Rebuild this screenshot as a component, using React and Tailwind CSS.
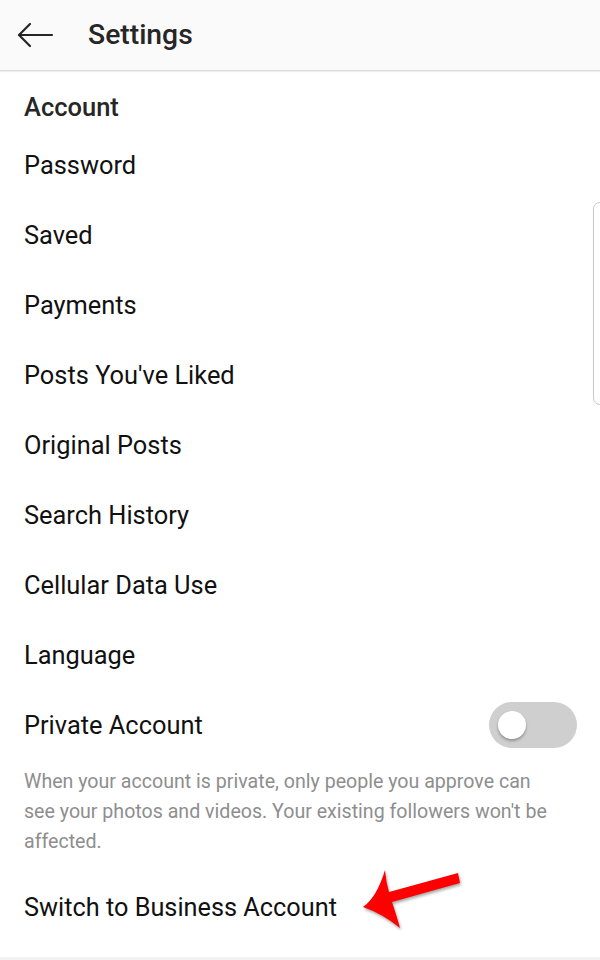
export default function App() {
  const items = [
    "Password",
    "Saved",
    "Payments",
    "Posts You've Liked",
    "Original Posts",
    "Search History",
    "Cellular Data Use",
    "Language",
  ];
  return (
    <div className="relative w-[600px] h-[960px] overflow-hidden bg-white text-[#111] font-['Roboto',sans-serif]">
      <div className="h-[71px] bg-[#fafafa] border-b border-[#dbdbdb] shadow-[0_1px_1px_rgba(0,0,0,0.06)] flex items-center">
        <svg width="38" height="26" viewBox="0 0 38 26" className="ml-[16px]" fill="none" stroke="#262626" strokeWidth="2.2" strokeLinecap="round" strokeLinejoin="round">
          <path d="M36 13H3" />
          <path d="M14 2L3 13L14 24" />
        </svg>
        <div className="ml-[34px] text-[28.3px] font-medium leading-none text-[#262626]">Settings</div>
      </div>
      <div className="px-[24px]">
        <div className="h-[59px] pt-[21px] text-[25.5px] leading-[30px] font-medium text-[#262626]">Account</div>
        {items.map((t) => (
          <div key={t} className="h-[70px] flex items-center text-[25.4px] text-[#111]">{t}</div>
        ))}
        <div className="h-[70px] flex items-center justify-between text-[25.4px] text-[#111]">
          <span>Private Account</span>
          <div className="w-[88px] h-[46px] rounded-full bg-[#cfcfcf] flex items-center pl-[9px] mr-[-1px]">
            <div className="w-[28px] h-[28px] rounded-full bg-white shadow-[0_2px_3px_rgba(0,0,0,0.3)]"></div>
          </div>
        </div>
        <div className="pt-[7px] text-[19.6px] leading-[30px] text-[#8e8e8e] whitespace-nowrap">
          When your account is private, only people you approve can<br />
          see your photos and videos. Your existing followers won't be<br />
          affected.
        </div>
        <div className="mt-[16px] h-[70px] flex items-center text-[25.3px] text-[#111]">Switch to Business Account</div>
      </div>
      <div className="absolute left-0 right-0 top-[957px] h-[3px] bg-[#f2f2f2]"></div>
      <div className="absolute right-[-10px] top-[202px] w-[17px] h-[203px] rounded-[7px] border border-[#c8c8c8] bg-white"></div>
      <svg className="absolute left-[355px] top-[862px]" width="110" height="72" viewBox="0 0 110 72" style={{ filter: "drop-shadow(1px 2px 1.5px rgba(0,0,0,0.35))" }}>
        <path d="M103 11 L105 21 L37 40 Q42 55 45 66 Q28 52 8 45 Q22 35 30 8 Q31 20 34 30 Z" fill="#ff0000" />
      </svg>
    </div>
  );
}
